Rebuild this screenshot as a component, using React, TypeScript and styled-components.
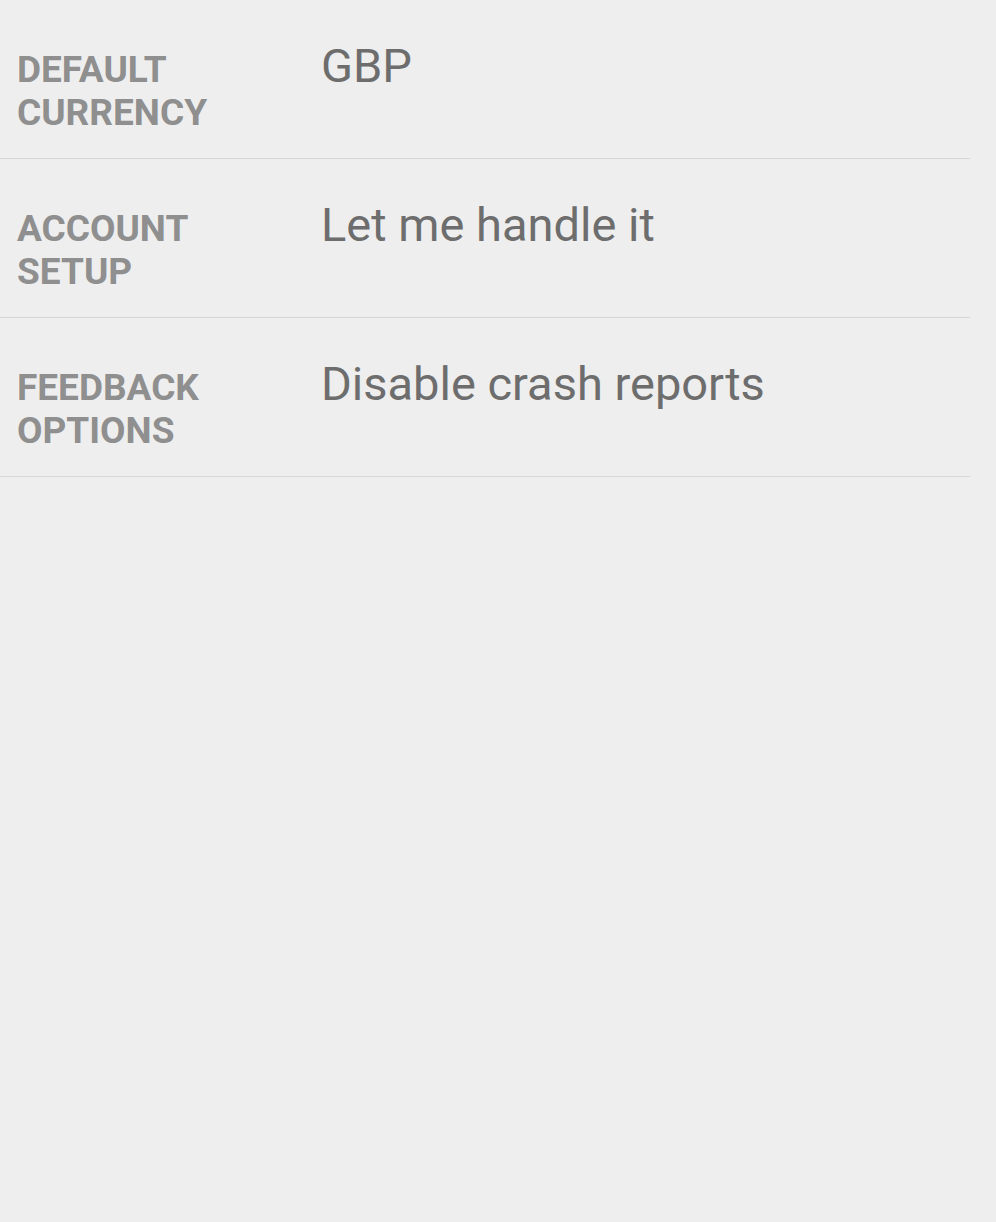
import React from "react";
import styled, { createGlobalStyle } from "styled-components";

const Global = createGlobalStyle`
  html, body { margin: 0; padding: 0; background: #eeeeee; }
  body { font-family: Roboto, "Liberation Sans", sans-serif; }
  #root { min-height: 1222px; background: #eeeeee; }
`;

const List = styled.div`
  width: 970px;
  display: flex;
  flex-direction: column;
`;

const Row = styled.div`
  display: grid;
  grid-template-columns: 304px 1fr;
  height: 158px;
  padding-left: 17px;
  border-bottom: 1px solid #d6d6d6;
`;

const Label = styled.div`
  padding-top: 48px;
  font-family: Roboto, "Liberation Sans", sans-serif;
  font-weight: 700;
  font-size: 37px;
  line-height: 43px;
  color: #8f8f8f;
  text-transform: uppercase;
`;

const Value = styled.div`
  padding-top: 38px;
  font-family: Roboto, "Liberation Sans", sans-serif;
  font-weight: 400;
  font-size: 47px;
  line-height: 56px;
  color: #6d6d6d;
`;

const rows = [
  { label: ["Default", "Currency"], value: "GBP" },
  { label: ["Account", "Setup"], value: "Let me handle it" },
  { label: ["Feedback", "Options"], value: "Disable crash reports" },
];

export default function App() {
  return (
    <>
      <Global />
      <List>
        {rows.map((r) => (
          <Row key={r.value}>
            <Label>
              {r.label[0]}
              <br />
              {r.label[1]}
            </Label>
            <Value>{r.value}</Value>
          </Row>
        ))}
      </List>
    </>
  );
}
